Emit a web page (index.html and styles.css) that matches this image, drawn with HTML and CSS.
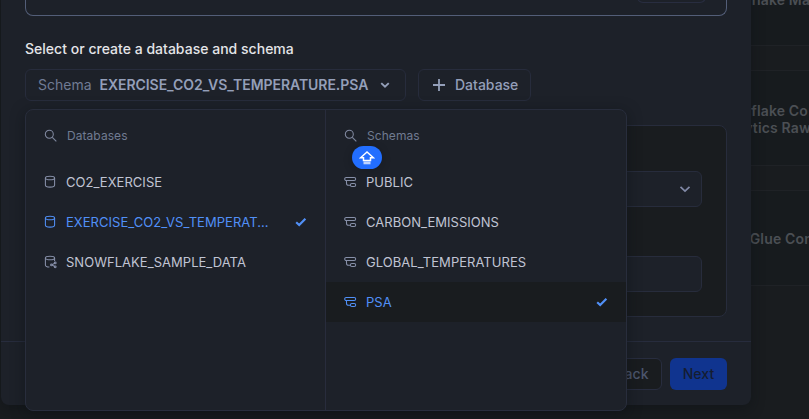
FILE: index.html
```html
<!DOCTYPE html>
<html lang="en">
<head>
<meta charset="utf-8">
<title>Select database and schema</title>
<link rel="stylesheet" href="styles.css">
</head>
<body>
<svg class="defs" aria-hidden="true">
  <symbol id="search" viewBox="0 0 14 14"><circle cx="5.3" cy="5.3" r="4"/><path d="M8.3 8.3l4 4"/></symbol>
  <symbol id="database" viewBox="0 0 14 14"><ellipse cx="6" cy="3" rx="4.6" ry="1.8"/><path d="M1.4 3v7c0 1.1 2 2.1 4.6 2.1s4.6-1 4.6-2.1V3"/></symbol>
  <symbol id="shared" viewBox="0 0 14 14"><ellipse cx="6" cy="3" rx="4.6" ry="1.8"/><path d="M1.4 3v7c0 1.1 1.6 2 4 2.1M10.6 3v3M7.8 9.9l3-1.7M7.8 9.9l3 1.6"/><circle cx="7.5" cy="9.9" r=".9"/><circle cx="11.2" cy="7.9" r=".9"/><circle cx="11.2" cy="11.8" r=".9"/></symbol>
  <symbol id="schema" viewBox="0 0 14 14"><rect x=".7" y="2.5" width="11" height="3" rx="1.5"/><path d="M2.5 5.5v2.7c0 1.5.7 2.1 2.2 2.1h1.6"/><rect x="6.4" y="8.5" width="5.3" height="3" rx="1.5"/></symbol>
  <symbol id="check" viewBox="0 0 12 12"><path d="M1.2 6.2l3 2.8 6.2-6.2"/></symbol>
  <symbol id="chevron" viewBox="0 0 12 12"><path d="M1.5 3.8L6 8.1l4.5-4.3"/></symbol>
</svg>
<main class="page">
  <section class="catalog">
    <article class="tile"><p>Snowflake Ma</p></article>
    <article class="tile"><p>Snowflake Co<br>Analytics Raw</p></article>
    <article class="tile"><p>AWS Glue Con</p></article>
  </section>

  <section class="modal">
    <div class="modal-body">
      <div class="dropzone"><div class="browse"></div></div>
      <h1>Select or create a database and schema</h1>
      <div class="toolbar">
        <button class="btn schema-btn"><span class="label">Schema</span><b>EXERCISE_CO2_VS_TEMPERATURE.PSA</b><svg class="caret"><use href="#chevron"/></svg></button>
        <button class="btn db-btn"><svg class="plus" viewBox="0 0 12 12"><path d="M6 0v12M0 6h12"/></svg><span>Database</span></button>
      </div>
      <div class="settings">
        <div class="field"><svg><use href="#chevron"/></svg></div>
        <div class="field"></div>
      </div>
    </div>
    <footer class="actions">
      <button class="back">Back</button>
      <button class="next">Next</button>
    </footer>
  </section>

  <div class="picker">
    <div class="column">
      <div class="search"><svg class="icon"><use href="#search"/></svg><span>Databases</span></div>
      <ul>
        <li><svg class="icon"><use href="#database"/></svg><span>CO2_EXERCISE</span></li>
        <li class="selected"><svg class="icon"><use href="#database"/></svg><span>EXERCISE_CO2_VS_TEMPERAT...</span><svg class="check"><use href="#check"/></svg></li>
        <li><svg class="icon"><use href="#shared"/></svg><span>SNOWFLAKE_SAMPLE_DATA</span></li>
      </ul>
    </div>
    <div class="column">
      <div class="search"><svg class="icon"><use href="#search"/></svg><span>Schemas</span></div>
      <ul>
        <li><svg class="icon"><use href="#schema"/></svg><span>PUBLIC</span></li>
        <li><svg class="icon"><use href="#schema"/></svg><span>CARBON_EMISSIONS</span></li>
        <li><svg class="icon"><use href="#schema"/></svg><span>GLOBAL_TEMPERATURES</span></li>
        <li class="selected active"><svg class="icon"><use href="#schema"/></svg><span>PSA</span><svg class="check"><use href="#check"/></svg></li>
      </ul>
      <div class="caps"><svg viewBox="0 0 16 16"><path d="M8 2L1.6 7.8h2.9v2.7h7V7.8h2.9z"/><rect x="4.5" y="11.5" width="7" height="2.8"/></svg></div>
    </div>
  </div>
</main>
</body>
</html>
```

FILE: styles.css
```css
* { box-sizing: border-box; }
body { margin: 0; background: #191c1f; font-family: Inter, "Liberation Sans", sans-serif; }
h1, p, ul { margin: 0; padding: 0; }
ul { list-style: none; }
svg { display: block; fill: none; stroke: currentColor; flex: none; }
button { font: inherit; }
.defs { position: absolute; width: 0; height: 0; }
.page { position: relative; width: 809px; height: 419px; overflow: hidden; }

.catalog { display: grid; grid-template-rows: 97px 96px 96px; gap: 24px; margin-left: 640px; margin-right: -40px; margin-top: -51px; height: 470px; align-content: start; }
.tile { display: flex; align-items: center; border: 1px solid #1f2226; background: #171b1e; padding: 1px 0 0 72px; color: #4b4f54; font-size: 14px; font-weight: 600; line-height: 17px; letter-spacing: .15px; white-space: nowrap; }
.tile:first-child { padding-top: 3px; }

.modal { position: absolute; left: 1px; top: -8px; width: 750px; height: 413px; border-radius: 8px; background: #1d2129; box-shadow: 0 4px 14px #0c101470; display: flex; flex-direction: column; }
.modal-body { height: 350px; padding: 0 24px; overflow: hidden; border-bottom: 1px solid #272c3d; }
.dropzone { height: 24px; border: 1px solid #535e78; border-top: 0; border-radius: 0 0 8px 8px; display: flex; justify-content: flex-end; padding-right: 20px; }
.browse { width: 69px; height: 11px; border: 1px solid #282d40; border-top: 0; border-radius: 0 0 6px 6px; }
h1 { margin-top: 24px; height: 18px; color: #e4e5e8; font-size: 14px; line-height: 18px; font-weight: 500; letter-spacing: .02px; }
.toolbar { display: flex; gap: 12px; margin-top: 11px; }
.btn { display: flex; align-items: center; height: 32px; border: 1px solid #272c3c; border-radius: 6px; background: #1d2129; color: #949fb9; font-size: 14px; letter-spacing: 0; padding: 0 12px 1px; white-space: nowrap; }
.schema-btn { width: 381px; }
.schema-btn b { font-weight: 600; margin-left: 8px; letter-spacing: -.05px; }
.label { color: #707b94; }
.caret { width: 10px; height: 10px; margin-left: auto; margin-right: 3px; stroke-width: 2.3; }
.db-btn { width: 113px; font-weight: 500; padding: 0 12px 1px 14px; gap: 10px; }
.plus { width: 12px; height: 12px; stroke-width: 1.8; }
.settings { margin-top: 24px; height: 192px; border: 1px solid #272c3c; border-radius: 8px; background: #191c1f; padding: 45px 24px; display: flex; flex-direction: column; gap: 49px; }
.field { height: 36px; flex: none; border: 1px solid #272c3c; border-radius: 6px; background: #1d2129; display: flex; align-items: center; justify-content: flex-end; padding-right: 10px; color: #8189a6; }
.field svg { width: 12px; height: 12px; stroke-width: 1.7; }
.actions { height: 63px; display: flex; justify-content: flex-end; gap: 8px; padding: 16px 24px 15px; }
.actions button { height: 32px; padding: 0 0 1px; border-radius: 6px; font-size: 14px; font-weight: 500; letter-spacing: .05px; }
.actions .back { width: 57px; padding-right: 3px; border: 1px solid #282d3f; background: #191c1f; color: #4c566d; }
.next { width: 57px; border: 0; background: #10348f; color: #151d31; }

.picker { position: absolute; left: 25px; top: 109px; width: 602px; height: 302px; border: 1px solid #282d3c; border-radius: 8px; background: #1d2129; box-shadow: 0 3px 14px #0c101480; display: grid; grid-template-columns: 299px 301px; }
.column + .column { border-left: 1px solid #282c3c; position: relative; }
.search { display: flex; align-items: center; height: 52px; padding: 0 0 1px 18px; gap: 9px; color: #707b91; font-size: 12px; letter-spacing: .06px; }
.search .icon { color: #8189a0; }
.icon { width: 14px; height: 14px; stroke-width: 1.05; }
li { display: flex; align-items: center; height: 40px; padding: 0 18px; gap: 8px; color: #c0c4d3; font-size: 13px; letter-spacing: .03px; }
li .icon { color: #8790a9; }
li.selected, li.selected .icon { color: #5190f7; }
.active { background: #191c1f; }
.check { width: 12px; height: 12px; margin-left: auto; stroke-width: 2.2; }
.caps { position: absolute; left: 26px; top: 36px; width: 30px; height: 23px; border-radius: 12px; background: #226eff; color: #fff; display: flex; align-items: center; justify-content: center; box-shadow: 0 2px 8px #0c101440; }
.caps svg { width: 16px; height: 16px; stroke-width: 1.5; }
.caps rect { fill: #fff; stroke: none; opacity: .7; }
```
